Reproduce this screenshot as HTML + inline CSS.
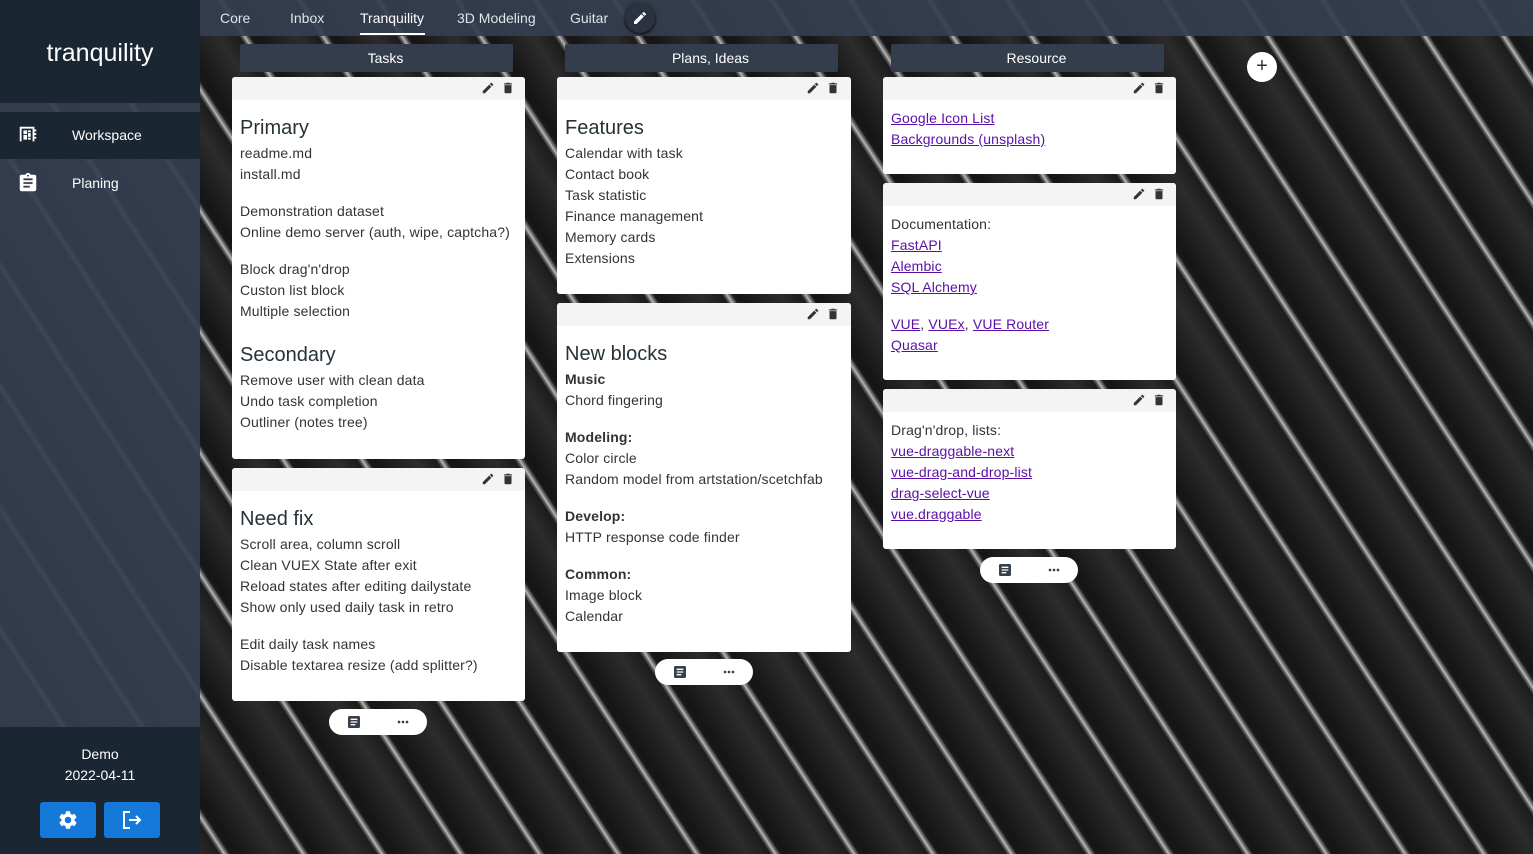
<!DOCTYPE html>
<html><head><meta charset="utf-8"><style>
*{box-sizing:border-box;margin:0;padding:0}
body{width:1533px;height:854px;overflow:hidden;font-family:"Liberation Sans",sans-serif;position:relative;
background:#1c1c1c repeating-linear-gradient(57deg,#151515 0px,#2c2c2c 34px,#1c1c1c 52px,#777 55px,#bbb 56px,#777 58px,#181818 61px,#151515 66px);}
.side{position:absolute;left:0;top:0;width:200px;height:854px;background:rgba(52,62,80,.93)}
.side .top{height:103px;background:#1a2631;color:#fff;font-size:25px;text-align:center;padding-top:39px}
.side .ws{position:absolute;top:112px;left:0;width:200px;height:47px;background:#1a2631;color:#fff;font-size:14px}
.side .pl{position:absolute;top:160px;left:0;width:200px;height:47px;color:#fff;font-size:14px}
.side .lbl{position:absolute;left:72px;top:15px}
.side .ic{position:absolute;left:17px;top:12px}
.side .bot{position:absolute;left:0;top:727px;width:200px;height:127px;background:#1a2631;color:#fff;text-align:center;font-size:14px;padding-top:17px;line-height:21px}
.btn{position:absolute;top:75px;width:56px;height:36px;background:#1479d9;border-radius:3px;display:flex;align-items:center;justify-content:center}
.tabs{position:absolute;left:200px;top:0;right:0;height:36px;background:rgba(52,62,80,.93)}
.tab{position:absolute;top:10px;color:#dfe3e8;font-size:14px}
.chead{position:absolute;top:44px;height:28px;background:#333d4c;color:#fff;font-size:14px;text-align:center;line-height:28px;border-radius:2px;padding-left:18px}
.card{position:absolute;background:#fff;border-radius:3px;color:#333;font-size:14px;line-height:21px;letter-spacing:.15px}
.card .bar{height:23px;background:#f4f4f4;position:relative;border-radius:3px 3px 0 0}
.card .bar svg{position:absolute;top:4px}
.card .b{padding:13px 8px 0 8px}
h2{font-weight:normal;font-size:20px;line-height:30px;color:#263238;letter-spacing:0}
.sp{height:16px}
a{color:#5a0fa8;text-decoration:underline}
.pill{position:absolute;width:98px;height:26px;background:#fff;border-radius:13px}
.plus{position:absolute;left:1247px;top:52px;width:30px;height:30px;border-radius:50%;background:#fff;color:#333;font-size:20px;text-align:center;line-height:29px}
</style></head><body>
<svg width="0" height="0" style="position:absolute"><defs>
<symbol id="pen" viewBox="0 0 24 24"><path fill="#333" d="M3 17.25V21h3.75L17.81 9.94l-3.75-3.75L3 17.25zM20.71 7.04a1 1 0 000-1.41l-2.34-2.34a1 1 0 00-1.41 0l-1.83 1.83 3.75 3.75 1.83-1.83z"/></symbol>
<symbol id="del" viewBox="0 0 24 24"><path fill="#333" d="M6 19c0 1.1.9 2 2 2h8c1.1 0 2-.9 2-2V7H6v12zM19 4h-3.5l-1-1h-5l-1 1H5v2h14V4z"/></symbol>
<symbol id="note" viewBox="0 0 24 24"><path fill="#37404d" d="M19 3H5c-1.1 0-2 .9-2 2v14c0 1.1.9 2 2 2h14c1.1 0 2-.9 2-2V5c0-1.1-.9-2-2-2zm-5 14H7v-2h7v2zm3-4H7v-2h10v2zm0-4H7V7h10v2z"/></symbol>
<symbol id="dots" viewBox="0 0 24 24"><circle cx="6" cy="12" r="2" fill="#37404d"/><circle cx="12" cy="12" r="2" fill="#37404d"/><circle cx="18" cy="12" r="2" fill="#37404d"/></symbol>
</defs></svg>

<div class="side">
<div class="top">tranquility</div>
<div class="ws"><svg class="ic" width="22" height="22" viewBox="0 0 24 24"><path fill="#fff" d="M3 3h16v3h2v2h-2v2h2v2h-2v2h2v2h-2v3H3V3zm2 2v14h12V5H5zm2 2h4v4H7V7zm5 0h3v2h-3V7zm0 3h3v4h-3v-4zm-5 2h4v5H7v-5zm5 3h3v2h-3v-2z"/></svg><span class="lbl">Workspace</span></div>
<div class="pl"><svg class="ic" width="22" height="22" viewBox="0 0 24 24"><path fill="#fff" d="M19 3h-4.18C14.4 1.84 13.3 1 12 1s-2.4.84-2.82 2H5c-1.1 0-2 .9-2 2v14c0 1.1.9 2 2 2h14c1.1 0 2-.9 2-2V5c0-1.1-.9-2-2-2zm-7 0c.55 0 1 .45 1 1s-.45 1-1 1-1-.45-1-1 .45-1 1-1zm2 14H7v-2h7v2zm3-4H7v-2h10v2zm0-4H7V7h10v2z"/></svg><span class="lbl">Planing</span></div>
<div class="bot">Demo<br>2022-04-11
<div class="btn" style="left:40px"><svg width="22" height="22" viewBox="0 0 24 24"><path fill="#fff" d="M19.14 12.94c.04-.3.06-.61.06-.94 0-.32-.02-.64-.07-.94l2.030-1.58a.49.49 0 00.12-.61l-1.92-3.32a.49.49 0 00-.59-.22l-2.39.96c-.5-.38-1.03-.7-1.62-.94l-.36-2.54a.48.48 0 00-.48-.41h-3.84c-.24 0-.43.17-.47.41l-.36 2.54c-.59.24-1.130.57-1.62.94l-2.39-.96a.48.48 0 00-.59.22L2.74 8.87c-.12.21-.08.47.12.61l2.03 1.58c-.05.3-.09.63-.09.94s.02.64.07.94l-2.03 1.58a.49.49 0 00-.12.61l1.92 3.32c.12.22.37.29.59.22l2.39-.96c.5.38 1.03.7 1.62.94l.36 2.54c.05.24.24.41.48.41h3.84c.24 0 .44-.17.47-.41l.36-2.54c.59-.24 1.13-.56 1.62-.94l2.39.96c.22.08.47 0 .59-.22l1.92-3.32c.12-.22.07-.47-.12-.61l-2.01-1.58zM12 15.6A3.6 3.6 0 1112 8.4a3.6 3.6 0 010 7.2z"/></svg></div>
<div class="btn" style="left:104px"><svg width="24" height="24" viewBox="0 0 24 24"><path fill="none" stroke="#fff" stroke-width="2" d="M10 4H4v16h6M9 12h11M16 8l4 4-4 4"/></svg></div>
</div>
</div>

<div class="tabs">
<span class="tab" style="left:20px">Core</span>
<span class="tab" style="left:90px">Inbox</span>
<span class="tab" style="left:160px;color:#fff">Tranquility</span>
<div style="position:absolute;left:160px;top:33px;width:65px;height:2px;background:#fff"></div>
<span class="tab" style="left:257px">3D Modeling</span>
<span class="tab" style="left:370px">Guitar</span>
<div style="position:absolute;left:425px;top:3px;width:30px;height:30px;border-radius:50%;background:#2b3340;box-shadow:0 1px 3px #000"><svg width="16" height="16" style="position:absolute;left:7px;top:7px" viewBox="0 0 24 24"><path fill="#fff" d="M3 17.25V21h3.75L17.81 9.94l-3.75-3.75L3 17.25zM20.71 7.04a1 1 0 000-1.41l-2.34-2.34a1 1 0 00-1.41 0l-1.83 1.83 3.75 3.75 1.83-1.83z"/></svg></div>
</div>

<div class="chead" style="left:240px;width:273px">Tasks</div>
<div class="chead" style="left:565px;width:273px">Plans, Ideas</div>
<div class="chead" style="left:891px;width:273px">Resource</div>

<!-- col1 -->
<div class="card" style="left:232px;top:77px;width:293px;height:382px">
<div class="bar"><svg width="14" height="14" style="left:249px"><use href="#pen"/></svg><svg width="14" height="14" style="left:269px"><use href="#del"/></svg></div>
<div class="b"><h2>Primary</h2>readme.md<br>install.md<div class="sp"></div>Demonstration dataset<br>Online demo server (auth, wipe, captcha?)<div class="sp"></div>Block drag'n'drop<br>Custon list block<br>Multiple selection<div class="sp" style="height:18px"></div><h2>Secondary</h2>Remove user with clean data<br>Undo task completion<br>Outliner (notes tree)</div></div>
<div class="card" style="left:232px;top:468px;width:293px;height:233px">
<div class="bar"><svg width="14" height="14" style="left:249px"><use href="#pen"/></svg><svg width="14" height="14" style="left:269px"><use href="#del"/></svg></div>
<div class="b"><h2>Need fix</h2>Scroll area, column scroll<br>Clean VUEX State after exit<br>Reload states after editing dailystate<br>Show only used daily task in retro<div class="sp"></div>Edit daily task names<br>Disable textarea resize (add splitter?)</div></div>
<div class="pill" style="left:329px;top:709px"><svg width="16" height="16" style="position:absolute;left:17px;top:5px"><use href="#note"/></svg><svg width="16" height="16" style="position:absolute;left:66px;top:5px"><use href="#dots"/></svg></div>

<!-- col2 -->
<div class="card" style="left:557px;top:77px;width:294px;height:217px">
<div class="bar"><svg width="14" height="14" style="left:249px"><use href="#pen"/></svg><svg width="14" height="14" style="left:269px"><use href="#del"/></svg></div>
<div class="b"><h2>Features</h2>Calendar with task<br>Contact book<br>Task statistic<br>Finance management<br>Memory cards<br>Extensions</div></div>
<div class="card" style="left:557px;top:303px;width:294px;height:349px">
<div class="bar"><svg width="14" height="14" style="left:249px"><use href="#pen"/></svg><svg width="14" height="14" style="left:269px"><use href="#del"/></svg></div>
<div class="b"><h2>New blocks</h2><b>Music</b><br>Chord fingering<div class="sp"></div><b>Modeling:</b><br>Color circle<br>Random model from artstation/scetchfab<div class="sp"></div><b>Develop:</b><br>HTTP response code finder<div class="sp"></div><b>Common:</b><br>Image block<br>Calendar</div></div>
<div class="pill" style="left:655px;top:659px"><svg width="16" height="16" style="position:absolute;left:17px;top:5px"><use href="#note"/></svg><svg width="16" height="16" style="position:absolute;left:66px;top:5px"><use href="#dots"/></svg></div>

<!-- col3 -->
<div class="card" style="left:883px;top:77px;width:293px;height:97px">
<div class="bar"><svg width="14" height="14" style="left:249px"><use href="#pen"/></svg><svg width="14" height="14" style="left:269px"><use href="#del"/></svg></div>
<div class="b" style="padding-top:8px"><a>Google Icon List</a><br><a>Backgrounds (unsplash)</a></div></div>
<div class="card" style="left:883px;top:183px;width:293px;height:197px">
<div class="bar"><svg width="14" height="14" style="left:249px"><use href="#pen"/></svg><svg width="14" height="14" style="left:269px"><use href="#del"/></svg></div>
<div class="b" style="padding-top:8px">Documentation:<br><a>FastAPI</a><br><a>Alembic</a><br><a>SQL Alchemy</a><div class="sp"></div><a>VUE</a>, <a>VUEx</a>, <a>VUE Router</a><br><a>Quasar</a></div></div>
<div class="card" style="left:883px;top:389px;width:293px;height:160px">
<div class="bar"><svg width="14" height="14" style="left:249px"><use href="#pen"/></svg><svg width="14" height="14" style="left:269px"><use href="#del"/></svg></div>
<div class="b" style="padding-top:8px">Drag'n'drop, lists:<br><a>vue-draggable-next</a><br><a>vue-drag-and-drop-list</a><br><a>drag-select-vue</a><br><a>vue.draggable</a></div></div>
<div class="pill" style="left:980px;top:557px"><svg width="16" height="16" style="position:absolute;left:17px;top:5px"><use href="#note"/></svg><svg width="16" height="16" style="position:absolute;left:66px;top:5px"><use href="#dots"/></svg></div>

<div class="plus">+</div>
</body></html>
